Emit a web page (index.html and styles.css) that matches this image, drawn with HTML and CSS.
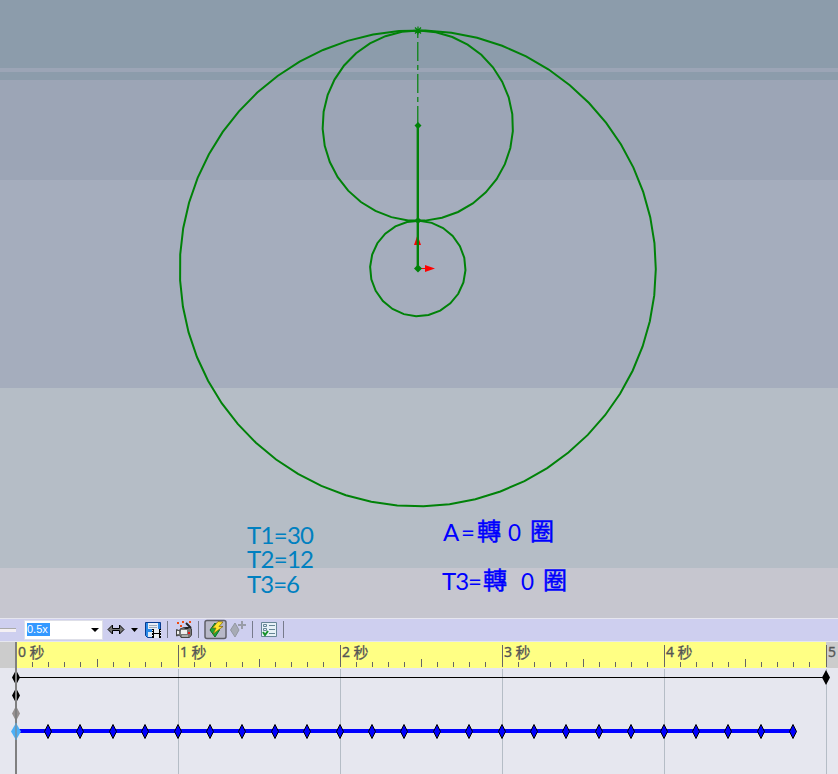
FILE: index.html
```html
<!DOCTYPE html>
<html lang="zh-Hant">
<head>
<meta charset="utf-8">
<title>Motion Study</title>
<link rel="stylesheet" href="styles.css">
</head>
<body>
<main class="viewport">
  <svg class="sketch" width="838" height="618" viewBox="0 0 838 618">
    <g class="curve" id="curves"></g>
    <path class="center-line" d="M417.800 31V125"/>
    <path class="axis" d="M417.500 235L414 245H421ZM425 265L435 268.500L425 272ZM420 268H426V269H420Z"/>
    <path class="arm" d="M417.800 125V268"/>
    <path class="dot" d="M414.500 125.500L418 122L421.500 125.500L418 129ZM414.500 220.500L418 217L421.500 220.500L418 224ZM414 268.500L418 264.500L422 268.500L418 272.500Z"/>
    <path class="star" d="M414 30.500H422M418 26.500V34.500M415 27.500L421 33.500M421 27.500L415 33.500"/>
    <g class="teeth">
      <text x="247" y="544" textLength="67">T1=30</text>
      <text x="247" y="568" textLength="67">T2=12</text>
      <text x="247" y="593" textLength="53">T3=6</text>
    </g>
    <g class="turns">
      <text x="443" y="541" textLength="32">A=</text><text x="477" y="540" class="cjk">轉</text><text x="508" y="541" textLength="13" lengthAdjust="spacingAndGlyphs">0</text><text x="530" y="540" class="cjk">圈</text>
      <text x="442" y="590" textLength="40">T3=</text><text x="483" y="589" class="cjk">轉</text><text x="521" y="590" textLength="13" lengthAdjust="spacingAndGlyphs">0</text><text x="543" y="589" class="cjk">圈</text>
    </g>
  </svg>
</main>
<section class="toolbar">
  <span class="slider"></span>
  <div class="speed"><span class="speed-value">0.5x</span><i class="caret"></i></div>
  <svg class="tools" width="190" height="23" viewBox="103 0 190 23">
    <path class="play-mode" d="M108 11.500L112.500 7V10.500H119.500V7L124 11.500L119.500 16V12.500H112.500V16Z"/>
    <path d="M131 10H138L134.500 14Z"/>
    <g><path fill="#2b8ae8" stroke="#083b90" d="M145.500 4.500H160.500V19.500H147.500L145.500 17.500Z"/><path fill="#e8edf5" d="M148 5H158V11H148Z"/><path stroke="#9caaba" d="M149 7.500H157M149 9.500H157"/><path fill="#dce9f6" d="M148 14H152V19H148Z"/><path d="M152 11H154V20H152ZM159 11H161V20H159ZM154 15H159V16H154Z"/><path fill="#e8edf5" d="M154 11H159V15H154ZM154 16H159V20H154ZM152 12H153V13H152ZM152 14H153V15H152ZM152 17H153V18H152ZM160 12H161V13H160ZM160 14H161V15H160ZM160 17H161V18H160Z"/></g>
    <path class="separator" d="M167.500 3V20M198.500 3V20M252.500 3V20M283.500 3V20"/>
    <g><path fill="#777" stroke="#444" d="M176.500 11.500L180 13V11L184 9.500H190L191.500 11V17L189.500 19.500H181L179.500 17L176.500 18Z"/><path fill="#eee" d="M181 12H187V16H181ZM177 13H179V16H177Z"/><path fill="#aaa" d="M182 17H188V19H182Z"/><path fill="#222" d="M184 11L186 9H190L188 11Z"/><path fill="none" stroke="#222" stroke-width="2" d="M186 5L191 10"/><path fill="#e11" d="M188 14H190V16H188Z"/><path fill="#f04a10" d="M177 4H179V6H177ZM180 7H182V9H180ZM182 3H184V5H182ZM189 3H191V5H189Z"/></g>
    <rect class="pressed" x="205" y="2.500" width="21" height="18" rx="2"/>
    <path fill="#20a735" stroke="#087021" d="M215 5L210 12L215 19L219.500 12Z"/><path fill="#ffe62c" stroke="#80600b" stroke-width=".7" d="M218 3.500L212.500 10H216L213 16L223 8.500H219L223 4Z"/>
    <path fill="#a7abb5" stroke="#9398a2" d="M235 5L230.500 12L235 19L239 12Z"/><path class="plus" d="M242 3V11M238 7H246"/>
    <g><path fill="#e7f1f7" stroke="#668596" d="M261.500 4.500H276.500V18.500H261.500Z"/><path fill="none" stroke="#668596" d="M263.500 6.500H266.500V8.500H263.500ZM263.500 10.500H266.500V12.500H263.500ZM269 7.500H275M269 11.500H275M269 15.500H275"/><path fill="none" stroke="#16912a" stroke-width="2" d="M263 14L265 17L268 13"/></g>
  </svg>
</section>
<section class="timeline">
  <svg class="chart" width="838" height="133" viewBox="0 641 838 133">
    <path fill="#ccc" d="M0 642H838V668H0Z"/><path fill="#ffff84" d="M16 642H826V668H16Z"/>
    <g id="ticks"></g>
    <path stroke="#000" d="M16 677.500H826"/>
    <path stroke="#00f" stroke-width="4" d="M16 731H793"/>
    <g id="keys"></g>
    <path fill="#000" d="M16 670L20 677.500L16 685L12 677.500ZM16 688L20 695.500L16 703L12 695.500ZM826 670L830 677.500L826 685L822 677.500Z"/>
    <path fill="#969090" d="M16 706L20 713.500L16 721L12 713.500Z"/>
    <path fill="#808080" d="M15 642H17V774H15Z"/>
    <path fill="#4ab0f8" d="M16 723L21 731.500L16 740L11 731.500Z"/><path fill="#6898b8" d="M15 723H17V740H15Z"/>
  </svg>
</section>
<script src="script.js"></script>
</body>
</html>
```
FILE: styles.css
```css
body { margin: 0; width: 838px; height: 774px; overflow: hidden; font-family: "Liberation Sans", "Noto Sans CJK TC", sans-serif; }
svg { display: block; }
.viewport { height: 618px; background: linear-gradient(#8c9cab 0 68px, #9ca5b6 68px 72px, #8c9cab 72px 80px, #9ca5b6 80px 180px, #a5adbd 180px 388px, #b5bdc6 388px 568px, #c6c6cf 568px); }
.curve { fill: none; stroke: #008208; stroke-width: 2; }
.arm { stroke: #008208; stroke-width: 2.4; }
.center-line { stroke: #008208; stroke-width: 1.2; stroke-dasharray: 19 4 5 4; stroke-dashoffset: -11; }
.axis { fill: #f00; }
.dot { fill: #008208; }
.star { stroke: #008208; stroke-width: 1.2; }
.sketch text { font-family: "Lato", "Noto Sans CJK TC", sans-serif; font-size: 24px; }
.sketch .cjk { font-family: "Noto Sans CJK TC", sans-serif; font-size: 24px; stroke: #00f; stroke-width: .5; }
.teeth { fill: #0080c0; }
.turns { fill: #00f; }
.toolbar { height: 23px; display: flex; align-items: center; background: #cecfef; box-shadow: inset 0 1px #e6e6ef; }
.slider { width: 16px; height: 4px; margin-right: 8px; background: #f4f0f4; border-top: 1px solid #aaa; box-sizing: border-box; }
.speed { width: 79px; height: 20px; display: flex; align-items: center; box-sizing: border-box; background: #fff; border: 1px solid #dedfe8; }
.speed-value { width: 23px; margin-left: 2px; background: #3399ff; color: #fff; font-size: 11px; line-height: 13px; }
.caret { margin-left: 41px; border: solid transparent; border-width: 4px 4px 0; border-top-color: #000; }
.play-mode { fill: #777; stroke: #000; }
.separator { stroke: #777b8c; }
.pressed { fill: #b8b8c8; stroke: #606068; stroke-width: 1.5; }
.plus { stroke: #999ca8; stroke-width: 2; }
.timeline { height: 133px; background: #e6e7ef; }
.tick { stroke: #666; }
.grid { stroke: #b5bdc6; }
.key { fill: #00f; stroke: #000; }
.label { fill: #555; stroke: #555; stroke-width: .3; font-family: "Noto Sans", "Noto Sans CJK TC", sans-serif; font-size: 14px; }
.label.unit { font-size: 15px; }
```
FILE: script.js
```js
const curves = document.getElementById('curves');
// Each circle is faceted: centre y, radius, number of sides, first vertex in degrees from the top.
for (const [cy, r, n, phase] of [[268.300, 238, 57, 1.800], [125.700, 95.200, 35, 0.700], [268.500, 47.700, 24, 2]]) {
  const points = Array.from({length: n}, (_, i) => {
    const a = (phase - 90 - i * 360 / n) * Math.PI / 180;
    return `${417.800 + r * Math.cos(a)},${cy + r * Math.sin(a)}`;
  }).join(' ');
  curves.insertAdjacentHTML('beforeend', `<polygon points="${points}"/>`);
}
let ticks = '';
for (let i = 0; i <= 50; i++) {
  const x = Math.floor(16 + i * 16.2) + .5;
  const top = i % 10 === 0 ? 645 : i % 5 === 0 ? 659 : 662;
  ticks += `<path class="tick" d="M${x} ${top}V667"/>`;
  if (i % 10 === 0) ticks += `<path class="grid" d="M${x} 669V774"/><text class="label" x="${x + 1.500}" y="657">${i / 10}</text>` + (i < 50 ? `<text class="label unit" x="${x + 13}" y="658">秒</text>` : '');
}
document.getElementById('ticks').innerHTML = ticks;
let keys = '';
for (let i = 1; i <= 24; i++) {
  const x = Math.round(15.500 + i * 32.400);
  keys += `<path class="key" d="M${x} 724.500L${x + 3.500} 731.500L${x} 738.500L${x - 3.500} 731.500Z"/>`;
}
document.getElementById('keys').innerHTML = keys;
```
